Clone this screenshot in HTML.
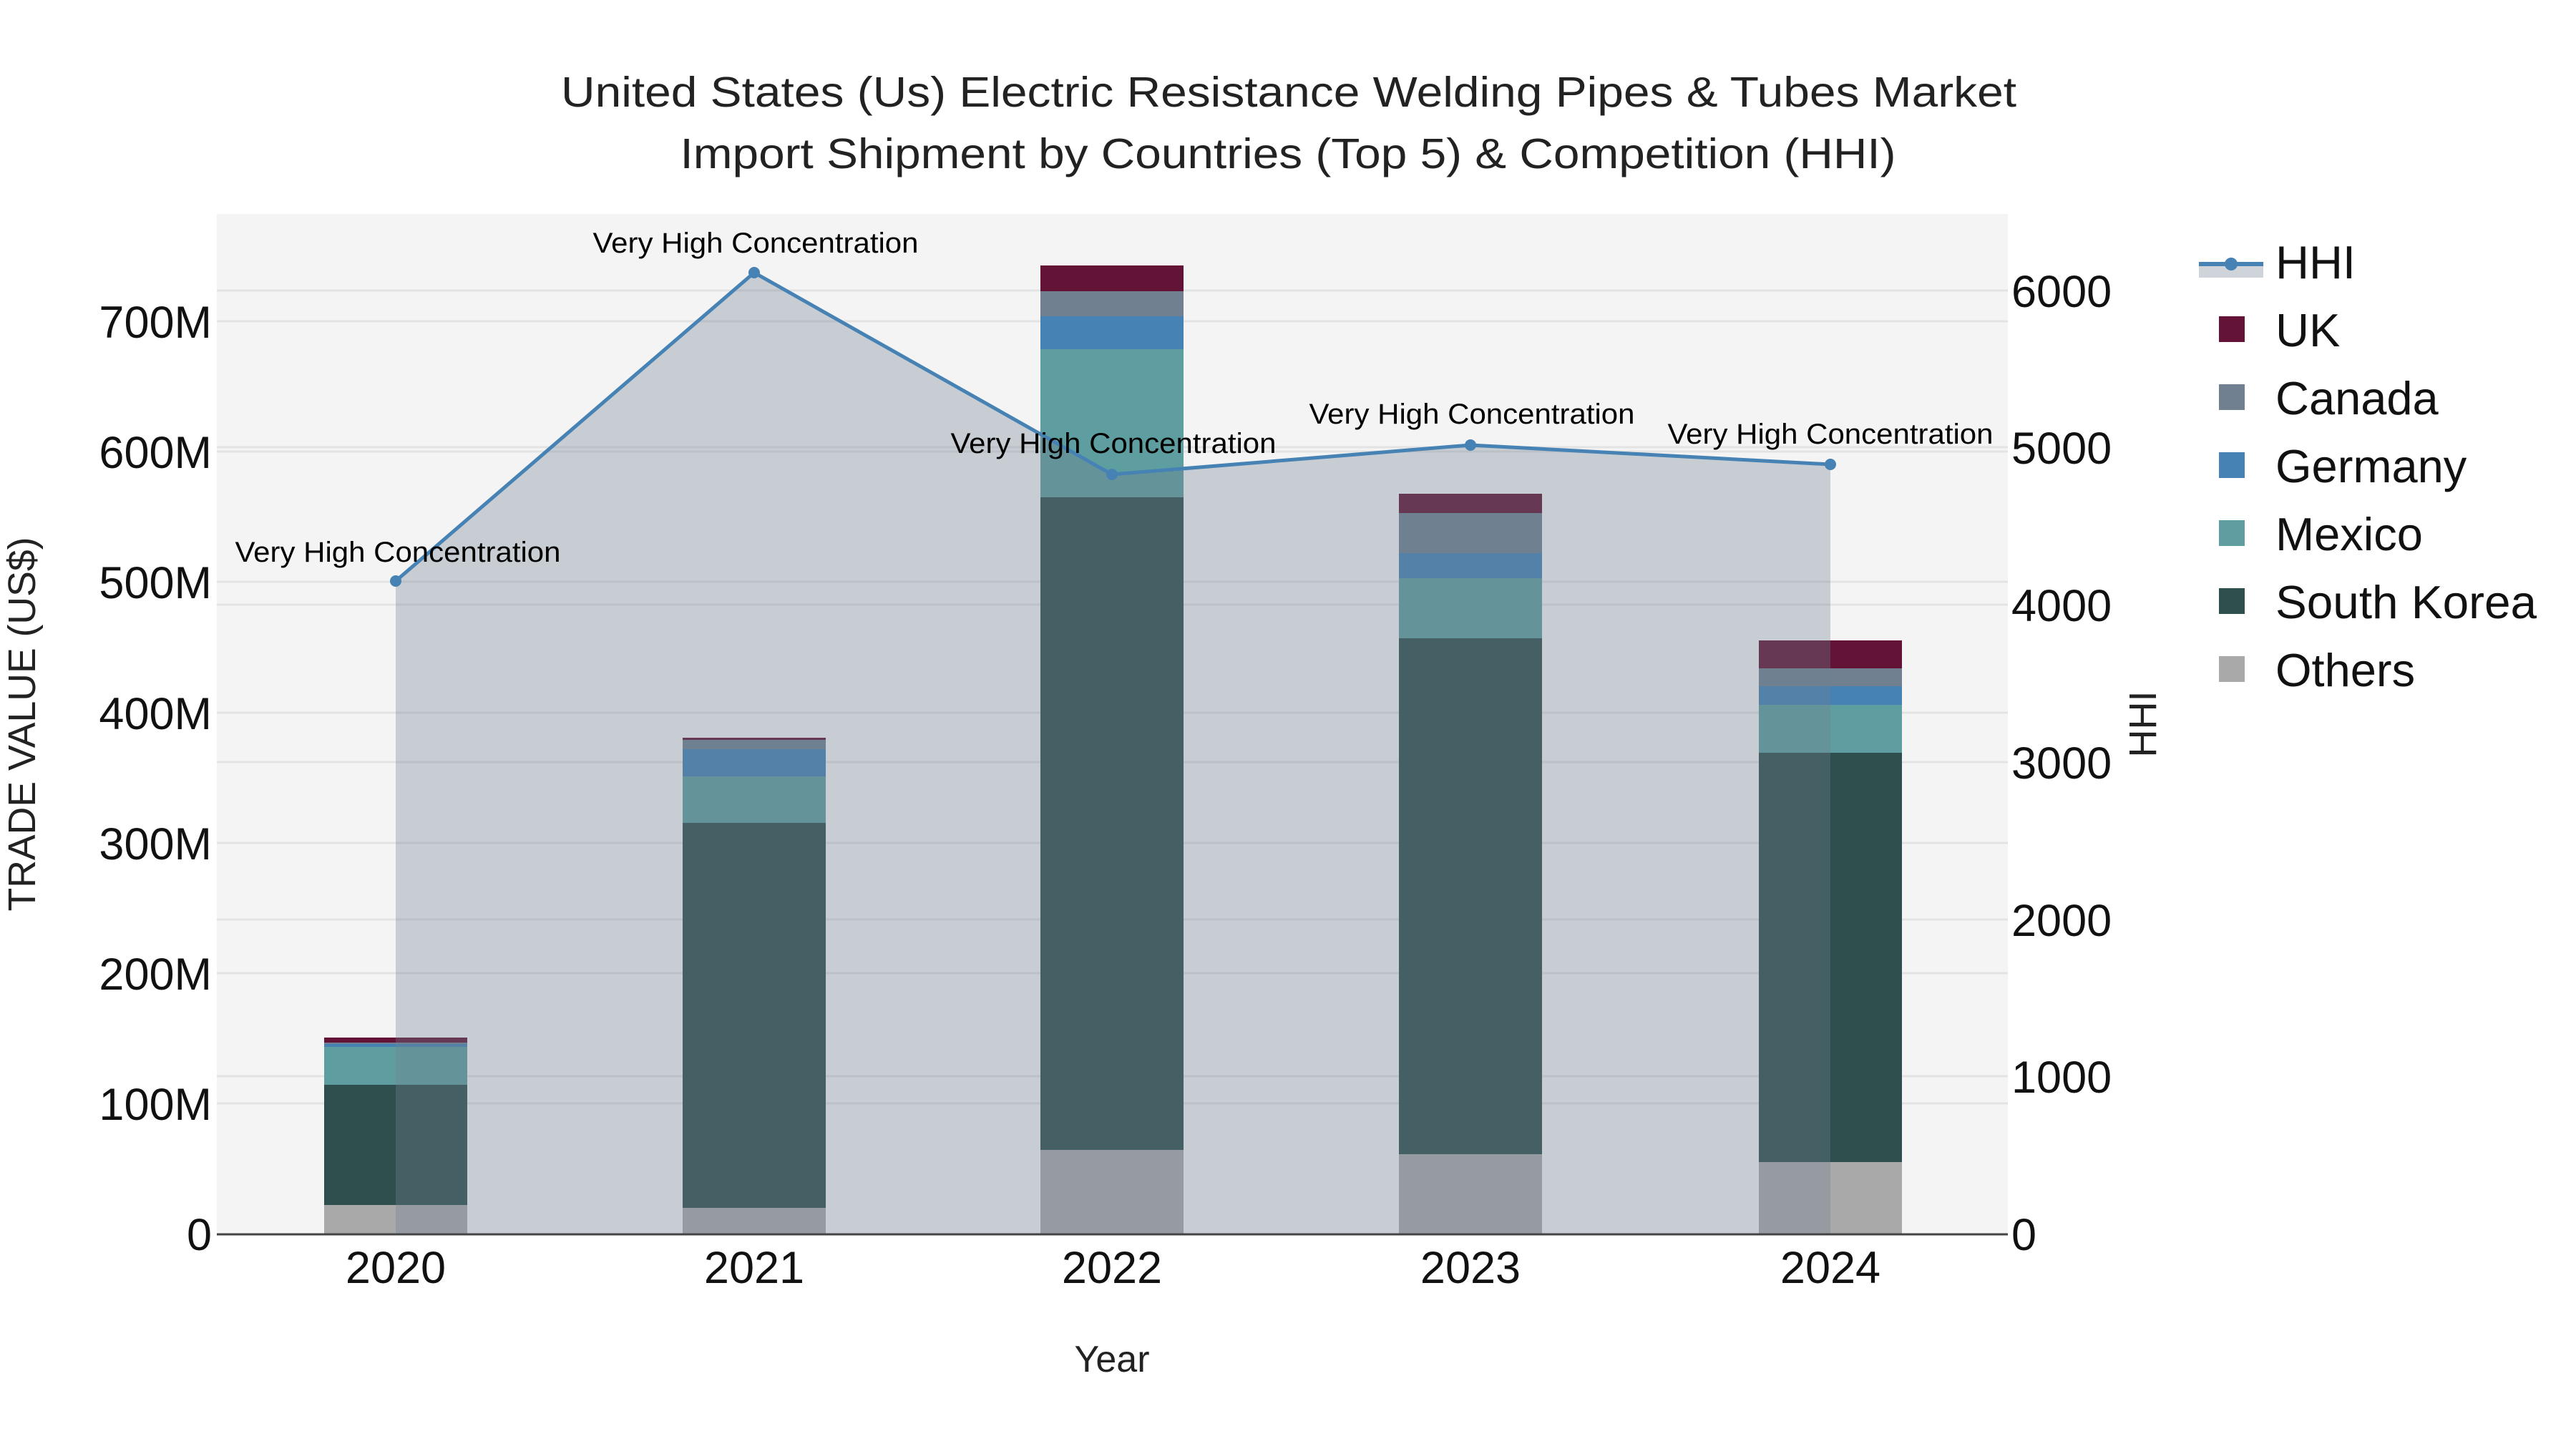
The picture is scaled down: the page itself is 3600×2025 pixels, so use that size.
<!DOCTYPE html>
<html><head><meta charset="utf-8"><style>html,body{margin:0;padding:0;background:#fff}svg{display:block}</style></head>
<body>
<svg width="3600" height="2025" viewBox="0 0 3600 2025" xmlns="http://www.w3.org/2000/svg" font-family="Liberation Sans, Arial, sans-serif">
<rect x="0" y="0" width="3600" height="2025" fill="#fff"/>
<rect x="303" y="299" width="2503" height="1425" fill="#f4f4f4"/>
<g stroke="#e3e3e3" stroke-width="3">
<line x1="303" x2="2806" y1="1542" y2="1542"/><line x1="303" x2="2806" y1="1360" y2="1360"/><line x1="303" x2="2806" y1="1178" y2="1178"/><line x1="303" x2="2806" y1="996" y2="996"/><line x1="303" x2="2806" y1="813" y2="813"/><line x1="303" x2="2806" y1="631" y2="631"/><line x1="303" x2="2806" y1="449" y2="449"/>
<line x1="303" x2="2806" y1="1504" y2="1504"/><line x1="303" x2="2806" y1="1285" y2="1285"/><line x1="303" x2="2806" y1="1065" y2="1065"/><line x1="303" x2="2806" y1="845" y2="845"/><line x1="303" x2="2806" y1="625" y2="625"/><line x1="303" x2="2806" y1="406" y2="406"/>
</g>
<!-- bars -->
<g>
<rect x="453" y="1684" width="200" height="40" fill="#a9a9a9"/><rect x="453" y="1516" width="200" height="168" fill="#2f4f4f"/><rect x="453" y="1463" width="200" height="53" fill="#5f9ea0"/><rect x="453" y="1459" width="200" height="4" fill="#4682b4"/><rect x="453" y="1457" width="200" height="2" fill="#708090"/><rect x="453" y="1450" width="200" height="7" fill="#631336"/>
<rect x="954" y="1688" width="200" height="36" fill="#a9a9a9"/><rect x="954" y="1150" width="200" height="538" fill="#2f4f4f"/><rect x="954" y="1085" width="200" height="65" fill="#5f9ea0"/><rect x="954" y="1047" width="200" height="38" fill="#4682b4"/><rect x="954" y="1034" width="200" height="13" fill="#708090"/><rect x="954" y="1031" width="200" height="3" fill="#631336"/>
<rect x="1454" y="1607" width="200" height="117" fill="#a9a9a9"/><rect x="1454" y="695" width="200" height="912" fill="#2f4f4f"/><rect x="1454" y="488" width="200" height="207" fill="#5f9ea0"/><rect x="1454" y="442" width="200" height="46" fill="#4682b4"/><rect x="1454" y="407" width="200" height="35" fill="#708090"/><rect x="1454" y="371" width="200" height="36" fill="#631336"/>
<rect x="1955" y="1613" width="200" height="111" fill="#a9a9a9"/><rect x="1955" y="892" width="200" height="721" fill="#2f4f4f"/><rect x="1955" y="808" width="200" height="84" fill="#5f9ea0"/><rect x="1955" y="773" width="200" height="35" fill="#4682b4"/><rect x="1955" y="717" width="200" height="56" fill="#708090"/><rect x="1955" y="690" width="200" height="27" fill="#631336"/>
<rect x="2458" y="1624" width="200" height="100" fill="#a9a9a9"/><rect x="2458" y="1052" width="200" height="572" fill="#2f4f4f"/><rect x="2458" y="985" width="200" height="67" fill="#5f9ea0"/><rect x="2458" y="959" width="200" height="26" fill="#4682b4"/><rect x="2458" y="934" width="200" height="25" fill="#708090"/><rect x="2458" y="895" width="200" height="39" fill="#631336"/>
</g>
<!-- HHI area -->
<polygon points="553,1724 553,812 1054,381 1554,663 2055,622 2558,649 2558,1724" fill="rgba(112,128,144,0.34)"/>
<polyline points="553,812 1054,381 1554,663 2055,622 2558,649" fill="none" stroke="#4682b4" stroke-width="5"/>
<g fill="#4682b4"><circle cx="553" cy="812" r="8"/><circle cx="1054" cy="381" r="8"/><circle cx="1554" cy="663" r="8"/><circle cx="2055" cy="622" r="8"/><circle cx="2558" cy="649" r="8"/></g>
<line x1="303" x2="2806" y1="1725" y2="1725" stroke="#444" stroke-width="3"/>
<!-- annotations -->
<g font-size="40" fill="#000" text-anchor="middle">
<text x="556" y="785" textLength="455" lengthAdjust="spacingAndGlyphs">Very High Concentration</text>
<text x="1056" y="353" textLength="455" lengthAdjust="spacingAndGlyphs">Very High Concentration</text>
<text x="1556" y="633" textLength="455" lengthAdjust="spacingAndGlyphs">Very High Concentration</text>
<text x="2057" y="592" textLength="455" lengthAdjust="spacingAndGlyphs">Very High Concentration</text>
<text x="2558" y="620" textLength="455" lengthAdjust="spacingAndGlyphs">Very High Concentration</text>
</g>
<!-- title -->
<g font-size="59" fill="#222" text-anchor="middle">
<text x="1801" y="149" textLength="2034" lengthAdjust="spacingAndGlyphs">United States (Us) Electric Resistance Welding Pipes &amp; Tubes Market</text>
<text x="1800" y="235" textLength="1699" lengthAdjust="spacingAndGlyphs">Import Shipment by Countries (Top 5) &amp; Competition (HHI)</text>
</g>
<!-- y ticks -->
<g font-size="63" fill="#111" text-anchor="end">
<text x="296" y="1747">0</text><text x="296" y="1565">100M</text><text x="296" y="1383">200M</text><text x="296" y="1201">300M</text><text x="296" y="1019">400M</text><text x="296" y="836">500M</text><text x="296" y="654">600M</text><text x="296" y="472">700M</text>
</g>
<g font-size="63" fill="#111" text-anchor="start">
<text x="2811" y="1747">0</text><text x="2811" y="1527">1000</text><text x="2811" y="1308">2000</text><text x="2811" y="1088">3000</text><text x="2811" y="868">4000</text><text x="2811" y="648">5000</text><text x="2811" y="429">6000</text>
</g>
<g font-size="63" fill="#111" text-anchor="middle">
<text x="553" y="1793">2020</text><text x="1054" y="1793">2021</text><text x="1554" y="1793">2022</text><text x="2055" y="1793">2023</text><text x="2558" y="1793">2024</text>
</g>
<text x="1554" y="1917" font-size="52" fill="#222" text-anchor="middle">Year</text>
<text transform="translate(49,1012) rotate(-90)" font-size="54" fill="#222" text-anchor="middle" textLength="523" lengthAdjust="spacingAndGlyphs">TRADE VALUE (US$)</text>
<text transform="translate(3013,1012) rotate(-90)" font-size="54" fill="#222" text-anchor="middle">HHI</text>
<!-- legend -->
<rect x="3073" y="366" width="90" height="22" fill="#cfd4da"/>
<line x1="3073" x2="3163" y1="369" y2="369" stroke="#4682b4" stroke-width="6"/>
<circle cx="3118" cy="369" r="9" fill="#4682b4"/>
<rect x="3101" y="442" width="36" height="36" fill="#631336"/>
<rect x="3101" y="537" width="36" height="36" fill="#708090"/>
<rect x="3101" y="632" width="36" height="36" fill="#4682b4"/>
<rect x="3101" y="727" width="36" height="36" fill="#5f9ea0"/>
<rect x="3101" y="822" width="36" height="36" fill="#2f4f4f"/>
<rect x="3101" y="917" width="36" height="36" fill="#a9a9a9"/>
<g font-size="65" fill="#111">
<text x="3180" y="389">HHI</text><text x="3180" y="484">UK</text><text x="3180" y="579">Canada</text><text x="3180" y="674">Germany</text><text x="3180" y="769">Mexico</text><text x="3180" y="864" textLength="365" lengthAdjust="spacingAndGlyphs">South Korea</text><text x="3180" y="959">Others</text>
</g>
</svg>
</body></html>
